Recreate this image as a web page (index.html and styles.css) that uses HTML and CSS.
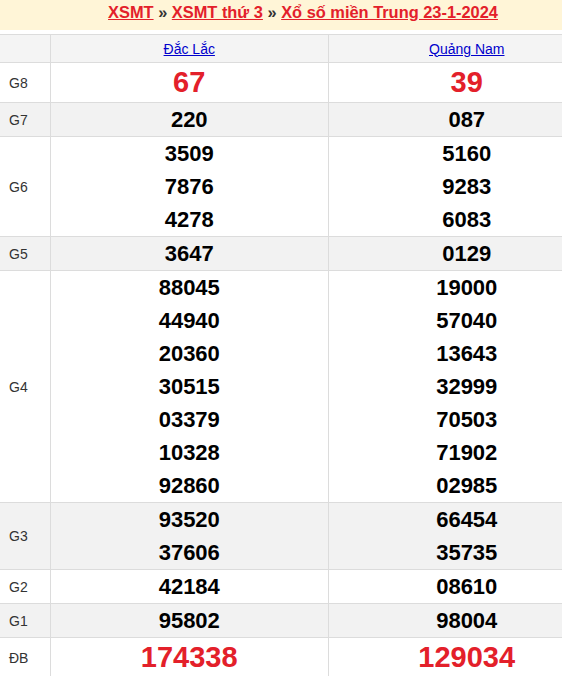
FILE: index.html
```html
<!DOCTYPE html>
<html lang="vi">
<head>
<meta charset="utf-8">
<title>XSMT 23-1-2024</title>
<link rel="stylesheet" href="styles.css">
</head>
<body>
<div class="page">
  <h2 class="title">
    <a href="#">XSMT</a> » <a href="#">XSMT thứ 3</a> » <a href="#">Xổ số miền Trung 23-1-2024</a>
  </h2>
  <table class="result">
    <thead>
      <tr class="head">
        <th class="label"></th>
        <th><a href="#">Đắc Lắc</a></th>
        <th><a href="#">Quảng Nam</a></th>
      </tr>
    </thead>
    <tbody>
      <tr class="g8">
        <td class="label">G8</td>
        <td><div class="num big red">67</div></td>
        <td><div class="num big red">39</div></td>
      </tr>
      <tr class="alt">
        <td class="label">G7</td>
        <td><div class="num">220</div></td>
        <td><div class="num">087</div></td>
      </tr>
      <tr>
        <td class="label">G6</td>
        <td><div class="num">3509</div><div class="num">7876</div><div class="num">4278</div></td>
        <td><div class="num">5160</div><div class="num">9283</div><div class="num">6083</div></td>
      </tr>
      <tr class="alt">
        <td class="label">G5</td>
        <td><div class="num">3647</div></td>
        <td><div class="num">0129</div></td>
      </tr>
      <tr>
        <td class="label">G4</td>
        <td>
          <div class="num">88045</div><div class="num">44940</div><div class="num">20360</div><div class="num">30515</div><div class="num">03379</div><div class="num">10328</div><div class="num">92860</div>
        </td>
        <td>
          <div class="num">19000</div><div class="num">57040</div><div class="num">13643</div><div class="num">32999</div><div class="num">70503</div><div class="num">71902</div><div class="num">02985</div>
        </td>
      </tr>
      <tr class="alt">
        <td class="label">G3</td>
        <td><div class="num">93520</div><div class="num">37606</div></td>
        <td><div class="num">66454</div><div class="num">35735</div></td>
      </tr>
      <tr>
        <td class="label">G2</td>
        <td><div class="num">42184</div></td>
        <td><div class="num">08610</div></td>
      </tr>
      <tr class="alt">
        <td class="label">G1</td>
        <td><div class="num">95802</div></td>
        <td><div class="num">98004</div></td>
      </tr>
      <tr class="db">
        <td class="label">ĐB</td>
        <td><div class="num big red">174338</div></td>
        <td><div class="num big red">129034</div></td>
      </tr>
    </tbody>
  </table>
</div>
</body>
</html>
```
FILE: styles.css
```css
html, body {
  margin: 0;
  padding: 0;
  overflow: hidden;
  background: #fff;
}
body {
  font-family: "Liberation Sans", Arial, sans-serif;
  color: #000;
}
.page {
  width: 606px;
}
.title {
  margin: 0 0 4px 0;
  height: 30px;
  background: #fff5d7;
  text-align: center;
  font-size: 16.4px;
  font-weight: bold;
  line-height: 24px;
  color: #333;
}
.title a {
  color: #e3202a;
  text-decoration: underline;
}
.result {
  width: 606px;
  border-collapse: collapse;
  table-layout: fixed;
}
.result th, .result td {
  border: 1px solid #dcdcdc;
  padding: 0;
  text-align: center;
  vertical-align: middle;
}
.result .label {
  width: 41px;
  padding-left: 9px;
  border-left: none;
  text-align: left;
  font-size: 14px;
  font-weight: normal;
  color: #333;
}
.head th {
  background: #f4f4f4;
  height: 27px;
  font-size: 14px;
  font-weight: normal;
}
.head a {
  color: #0000cc;
  text-decoration: underline;
}
.alt td {
  background: #f2f2f2;
}
.num {
  font-size: 22px;
  font-weight: bold;
  line-height: 33px;
}
.big {
  font-size: 29px;
  line-height: 39px;
}
.red {
  color: #e3202a;
}
```
